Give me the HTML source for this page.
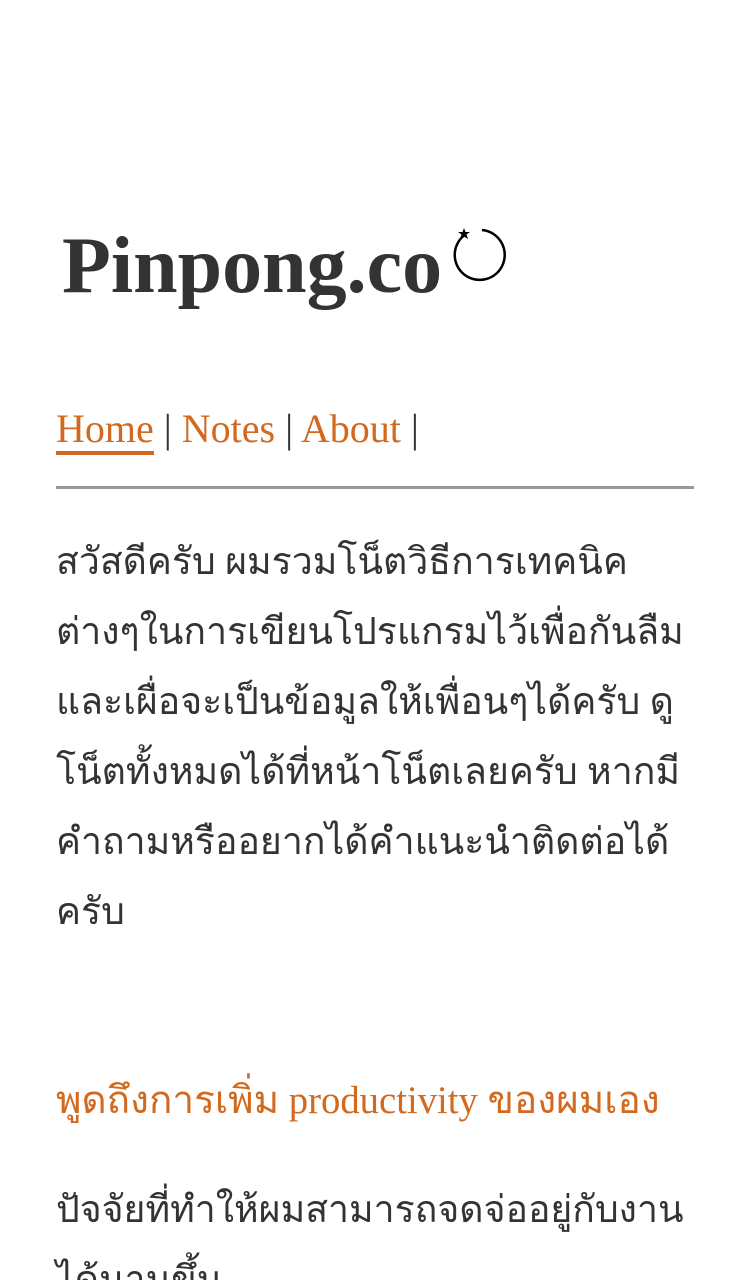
<!DOCTYPE html>
<html><head><meta charset="utf-8"><style>
body{margin:0;background:#fff;color:#333;font-family:"Liberation Serif",serif;}
.wrap{position:relative;width:750px;height:1280px;overflow:hidden;}
.title{position:absolute;left:62px;top:216px;font-size:80px;font-weight:bold;line-height:100px;color:#333;}
.logo{position:absolute;left:452px;top:224px;}
.nav{position:absolute;left:56px;top:404px;font-size:40px;line-height:50px;color:#333;}
.nav a{color:#d2691e;text-decoration:none;}
.nav a.home{border-bottom:4px solid #d2691e;}
hr{position:absolute;left:56px;top:486px;width:638px;margin:0;border:0;border-top:3px solid #999;}
.p{position:absolute;left:56px;font-size:37.4px;line-height:70px;white-space:nowrap;}
.h{color:#d2691e;font-size:38.7px;}
</style></head><body><div class="wrap">
<div class="title">Pinpong.co</div>
<svg class="logo" width="60" height="60" viewBox="0 0 60 60"><path d="M14 10 A25 25 0 1 0 30 6" fill="none" stroke="#000" stroke-width="2.5"/><polygon points="12,4 13.5,8 18,8 14.5,10.5 16,15 12,12.5 8,15 9.5,10.5 6,8 10.5,8" fill="#000"/></svg>
<div class="nav"><a class="home">Home</a> | <a>Notes</a> | <a>About</a> |</div>
<hr>
<div class="p" style="top:528px">สวัสดีครับ ผมรวมโน็ตวิธีการเทคนิค<br>ต่างๆในการเขียนโปรแกรมไว้เพื่อกันลืม<br>และเผื่อจะเป็นข้อมูลให้เพื่อนๆได้ครับ ดู<br>โน็ตทั้งหมดได้ที่หน้าโน็ตเลยครับ หากมี<br>คำถามหรืออยากได้คำแนะนำติดต่อได้<br>ครับ</div>
<div class="p h" style="top:1066px">พูดถึงการเพิ่ม productivity ของผมเอง</div>
<div class="p" style="top:1176px">ปัจจัยที่ทำให้ผมสามารถจดจ่ออยู่กับงาน<br>ได้นานขึ้น</div>
</div></body></html>
